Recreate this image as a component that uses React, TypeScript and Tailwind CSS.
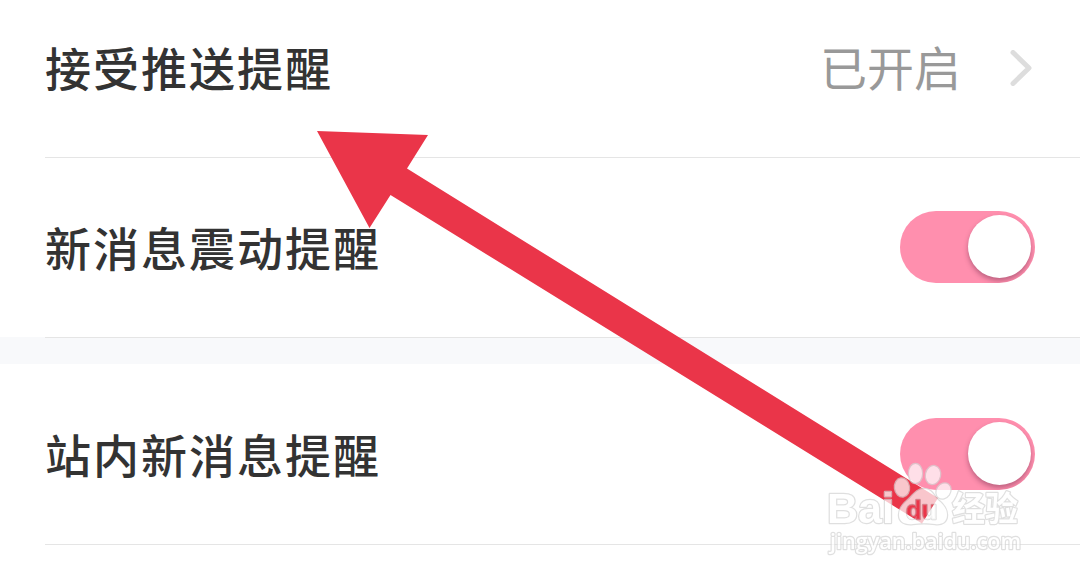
import { clsx } from 'clsx';
import { useState } from 'react';

interface ToggleProps {
  label: string;
  checked: boolean;
  onChange: (checked: boolean) => void;
}

function Toggle({ label, checked, onChange }: ToggleProps) {
  return (
    <button
      type="button"
      role="switch"
      aria-label={label}
      aria-checked={checked}
      onClick={() => onChange(!checked)}
      className={clsx(
        'flex h-18 w-[135px] shrink-0 cursor-pointer items-center overflow-hidden rounded-full px-1 pb-px',
        checked ? 'justify-end bg-[#ff8fae]' : 'justify-start bg-gray-200',
      )}
    >
      <span className="size-[63px] rounded-full bg-white shadow-[0_3px_5px_rgba(90,30,60,0.4)]" />
    </button>
  );
}

function RowLabel({ children }: { children: string }) {
  return (
    <span className="pb-[3px] text-[46px] leading-none font-medium tracking-[2px] text-[#333]">
      {children}
    </span>
  );
}

function Arrow() {
  return (
    <svg
      className="pointer-events-none absolute inset-0"
      width="1080"
      height="579"
      viewBox="0 0 1080 579"
    >
      <path
        d="M317 131 428 135 407 168.5 938 498 922 523.5 390.5 195 369.5 228Z"
        fill="#ea3549"
      />
    </svg>
  );
}

function Watermark() {
  return (
    <svg
      className="pointer-events-none absolute top-[455px] left-[820px]"
      width="215"
      height="105"
      viewBox="0 0 215 105"
    >
      <mask id="paw-mask">
        <rect width="215" height="105" fill="#fff" />
        <text
          x="86"
          y="64"
          textLength="31"
          lengthAdjust="spacingAndGlyphs"
          fill="#000"
          stroke="#555"
          strokeWidth="1"
          className="font-['Liberation_Sans'] text-[25px] font-bold"
        >
          du
        </text>
      </mask>
      <g
        opacity="0.72"
        fill="#fff"
        stroke="#d4d4d4"
        strokeWidth="2.5"
        strokeLinejoin="round"
        style={{ paintOrder: 'stroke' }}
      >
        {/* paw */}
        <ellipse cx="82" cy="32.5" rx="7" ry="9" transform="rotate(-8 82 32.5)" />
        <ellipse cx="95.5" cy="18.5" rx="6.5" ry="9.5" />
        <ellipse cx="113" cy="20" rx="7" ry="9" transform="rotate(12 113 20)" />
        <ellipse cx="123.5" cy="36" rx="6.5" ry="8" transform="rotate(35 123.5 36)" />
        <g mask="url(#paw-mask)">
          <path d="M104 34C96 34 93 41 88 45C82 50 79 54 79 60C79 67 85 70 93 69C101 68 107 68 115 69C122 70 127 67 127 60C127 54 124 50 118 45C113 40 112 34 104 34Z" />
          <text
            x="86"
            y="64"
            textLength="31"
            lengthAdjust="spacingAndGlyphs"
            fill="none"
            stroke="#ccc"
            className="font-['Liberation_Sans'] text-[25px] font-bold"
          >
            du
          </text>
        </g>
        <text
          x="7"
          y="68"
          textLength="67"
          lengthAdjust="spacingAndGlyphs"
          className="font-['Liberation_Sans'] text-[43px] font-bold"
        >
          Bai
        </text>
        <text
          x="132"
          y="66"
          textLength="66"
          lengthAdjust="spacingAndGlyphs"
          className="font-['Noto_Sans_CJK_SC'] text-[34px] font-bold"
        >
          经验
        </text>
        <text
          x="10"
          y="94"
          textLength="191"
          lengthAdjust="spacingAndGlyphs"
          className="font-['Open_Sans'] text-[22px] font-semibold"
        >
          jingyan.baidu.com
        </text>
      </g>
    </svg>
  );
}

export default function App() {
  const [vibrate, setVibrate] = useState(true);
  const [inApp, setInApp] = useState(true);

  return (
    <main className="relative h-[579px] w-[1080px] overflow-hidden bg-white font-['Noto_Sans_CJK_SC',sans-serif]">
      <section>
        <div className="ml-[45px] flex h-[158px] items-center justify-between border-b border-[#e5e5e5] pr-12 pb-[22px]">
          <RowLabel>接受推送提醒</RowLabel>
          <div className="flex items-center gap-[49px]">
            <span className="pb-1 text-[47px] leading-none text-[#999]">已开启</span>
            <svg width="22" height="36" viewBox="0 0 22 36" fill="none">
              <path
                d="M3 2.5 19 18 3 33.5"
                stroke="#ddd"
                strokeWidth="5"
                strokeLinecap="round"
                strokeLinejoin="round"
              />
            </svg>
          </div>
        </div>
        <div className="ml-[45px] flex h-[179px] items-center justify-between pr-[45px] pb-px">
          <RowLabel>新消息震动提醒</RowLabel>
          <Toggle label="新消息震动提醒" checked={vibrate} onChange={setVibrate} />
        </div>
      </section>

      {/* section gap */}
      <div className="h-[27px] bg-[#f8f9fb]">
        <div className="ml-[45px] h-px bg-[#e5e5e5]" />
      </div>

      <section>
        <div className="ml-[45px] flex h-[181px] items-center justify-between border-b border-[#e5e5e5] pr-[45px]">
          <RowLabel>站内新消息提醒</RowLabel>
          <Toggle label="站内新消息提醒" checked={inApp} onChange={setInApp} />
        </div>
      </section>

      <Arrow />
      <Watermark />
    </main>
  );
}
